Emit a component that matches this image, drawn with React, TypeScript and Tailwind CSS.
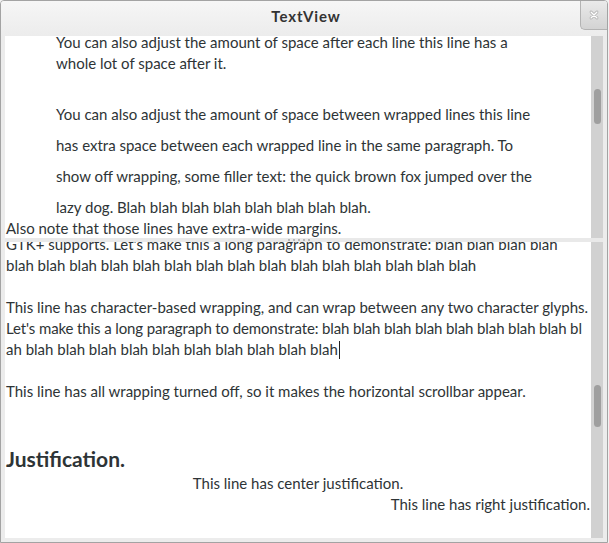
import React from "react";

const font = { fontFamily: "Lato, 'Open Sans', sans-serif" };

function Scrollbar({ thumbTop, thumbH }: { thumbTop: number; thumbH: number }) {
  return (
    <div className="w-[12px] shrink-0 bg-[#d1d1d1] relative">
      <div
        className="absolute left-[3px] w-[7px] rounded-full bg-[#9f9f9f]"
        style={{ top: thumbTop, height: thumbH }}
      />
    </div>
  );
}

function Line({ children, className = "" }: { children?: React.ReactNode; className?: string }) {
  return <div className={`h-[21px] leading-[21px] whitespace-nowrap ${className}`}>{children}</div>;
}

export default function App() {
  return (
    <div className="w-[609px] h-[543px] bg-[#f2f2f2] text-[#2e3436]" style={font}>
      <div className="w-[608px] h-[543px] flex flex-col bg-[#ececec] border border-[#a3a3a3] rounded-t-[4px] overflow-hidden">
        {/* title bar */}
        <div className="h-[35px] shrink-0 relative flex items-center justify-center bg-gradient-to-b from-[#f6f6f6] to-[#ececec]">
          <span className="text-[15px] font-bold text-[#333] tracking-[0.9px] mt-[-5px] ml-[4px]">TextView</span>
          <div className="absolute top-[-1px] right-[0px] w-[27px] h-[30px] rounded-bl-[5px] border-l border-b border-[#b3b3b3] bg-gradient-to-b from-[#ebebeb] to-[#d3d3d3] flex items-center justify-center">
            <svg width="10" height="10" viewBox="0 0 10 10">
              <path d="M2 2 L8 8 M8 2 L2 8" stroke="#9a9a9a" strokeWidth="2.6" strokeLinecap="round" />
              <path d="M2 2 L8 8 M8 2 L2 8" stroke="#ffffff" strokeWidth="1.6" strokeLinecap="round" />
            </svg>
          </div>
        </div>
        {/* body */}
        <div className="flex-1 flex flex-col pl-[4px] pr-[4px] pb-[4px]">
          {/* upper pane */}
          <div className="h-[202px] shrink-0 flex">
            <div className="flex-1 bg-white overflow-hidden text-[15px]">
              <div className="mt-[-4px]">
                <Line className="pl-[51px]">You can also adjust the amount of space after each line this line has a</Line>
                <Line className="pl-[51px] mb-[30px]">whole lot of space after it.</Line>
                <div className="pl-[51px] flex flex-col gap-[10px]">
                  <Line>You can also adjust the amount of space between wrapped lines this line</Line>
                  <Line>has extra space between each wrapped line in the same paragraph. To</Line>
                  <Line>show off wrapping, some filler text: the quick brown fox jumped over the</Line>
                  <Line>lazy dog. Blah blah blah blah blah blah blah blah.</Line>
                </div>
                <Line className="pl-[1px]">Also note that those lines have extra-wide margins.</Line>
              </div>
            </div>
            <Scrollbar thumbTop={53} thumbH={35} />
          </div>
          {/* pane handle */}
          <div className="h-[4px] shrink-0 bg-[#e9e9e9] flex items-center justify-center gap-[3px] pr-[10px]">
            <span className="w-[2px] h-[2px] bg-[#b8b8b8]" />
            <span className="w-[2px] h-[2px] bg-[#b8b8b8]" />
            <span className="w-[2px] h-[2px] bg-[#b8b8b8]" />
            <span className="w-[2px] h-[2px] bg-[#b8b8b8]" />
            <span className="w-[2px] h-[2px] bg-[#b8b8b8]" />
          </div>
          {/* lower pane */}
          <div className="flex-1 flex">
            <div className="flex-1 bg-white overflow-hidden text-[15px] pl-[1px] pr-[1px]">
              <div className="mt-[-8px]">
                <Line>GTK+ supports. Let's make this a long paragraph to demonstrate: blah blah blah blah</Line>
                <Line>blah blah blah blah blah blah blah blah blah blah blah blah blah blah blah</Line>
                <Line />
                <Line>This line has character-based wrapping, and can wrap between any two character glyphs.</Line>
                <Line className="tracking-[-0.12px]">Let's make this a long paragraph to demonstrate: blah blah blah blah blah blah blah blah bl</Line>
                <Line>
                  ah blah blah blah blah blah blah blah blah blah blah
                  <span className="inline-block w-[1px] h-[18px] bg-[#222] align-middle ml-[1px] mt-[-2px]" />
                </Line>
                <Line />
                <Line>This line has all wrapping turned off, so it makes the horizontal scrollbar appear.</Line>
                <Line />
                <Line />
                <div className="h-[29px] leading-[29px] text-[21px] font-bold text-[#2e3436]">Justification.</div>
                <Line className="text-center">This line has center justification.</Line>
                <Line className="text-right">This line has right justification.</Line>
              </div>
            </div>
            <Scrollbar thumbTop={143} thumbH={42} />
          </div>
        </div>
      </div>
    </div>
  );
}
